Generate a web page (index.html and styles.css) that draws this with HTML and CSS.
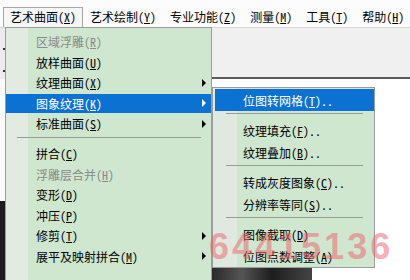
FILE: index.html
```html
<!DOCTYPE html>
<html lang="zh-CN">
<head>
  <meta charset="UTF-8">
  <title>艺术曲面菜单</title>
  <link rel="stylesheet" href="styles.css">
</head>
<body>
<div class="menubar">
  <div class="mb-item open">艺术曲面(<u>X</u>)</div>
  <div class="mb-item">艺术绘制(<u>Y</u>)</div>
  <div class="mb-item">专业功能(<u>Z</u>)</div>
  <div class="mb-item">测量(<u>M</u>)</div>
  <div class="mb-item">工具(<u>T</u>)</div>
  <div class="mb-item">帮助(<u>H</u>)</div>
</div>

<div class="workspace">
  <div class="edge">
    <div class="edge-tool"><span class="dot"></span><span class="dot"></span></div>
    <div class="edge-blank"></div>
    <div class="edge-photo"></div>
  </div>

  <div class="menu main-menu">
    <div class="item disabled">区域浮雕(<u>R</u>)</div>
    <div class="item">放样曲面(<u>U</u>)</div>
    <div class="item">纹理曲面(<u>X</u>)<span class="arrow"></span></div>
    <div class="item active">图象纹理(<u>K</u>)<span class="arrow"></span></div>
    <div class="item">标准曲面(<u>S</u>)<span class="arrow"></span></div>
    <div class="sep"></div>
    <div class="item">拼合(<u>C</u>)</div>
    <div class="item disabled">浮雕层合并(<u>H</u>)</div>
    <div class="item">变形(<u>D</u>)</div>
    <div class="item">冲压(<u>P</u>)</div>
    <div class="item">修剪(<u>T</u>)<span class="arrow"></span></div>
    <div class="item">展平及映射拼合(<u>M</u>)<span class="arrow"></span></div>
  </div>

  <div class="right">
    <div class="toolbar"></div>
    <div class="canvas">
      <div class="menu sub-menu">
        <div class="item active">位图转网格(<u>T</u>)..</div>
        <div class="sep"></div>
        <div class="item">纹理填充(<u>F</u>)..</div>
        <div class="item">纹理叠加(<u>B</u>)..</div>
        <div class="sep"></div>
        <div class="item">转成灰度图象(<u>C</u>)..</div>
        <div class="item">分辨率等同(<u>S</u>)..</div>
        <div class="sep"></div>
        <div class="item">图像截取(<u>D</u>)</div>
        <div class="item">位图点数调整(<u>A</u>)</div>
      </div>
      <div class="photo"></div>
    </div>
  </div>

  <div class="watermark">64415136</div>
</div>
</body>
</html>
```

FILE: styles.css
```css
body {
  margin: 0;
  width: 410px;
  height: 280px;
  overflow: hidden;
  background: #fff;
  font-family: "Noto Sans Mono CJK SC", "Noto Sans CJK SC", sans-serif;
  font-size: 12px;
  color: #000;
}

u {
  text-underline-offset: 1px;
}

/* menu bar */
.menubar {
  display: flex;
  align-items: flex-end;
  height: 27px;
  padding-left: 3px;
  background: #fcfcfc;
  box-sizing: border-box;
}

.mb-item {
  height: 19px;
  line-height: 18px;
  padding: 0 6px;
  border: 1px solid transparent;
  border-bottom: 0;
  white-space: nowrap;
}

.mb-item.open {
  border-color: #a6a6a6;
  background: #f6f6f6;
}

/* area under the bar */
.workspace {
  position: relative;
  display: flex;
  height: 253px;
  overflow: hidden;
}

.edge {
  width: 5px;
  display: flex;
  flex-direction: column;
}

.edge-tool {
  height: 52px;
  background: #ececec;
  border-top: 1px solid #d6d6d6;
  display: flex;
  flex-direction: column;
  align-items: flex-end;
  gap: 20px;
  padding-top: 20px;
  box-sizing: border-box;
}

.dot {
  width: 2px;
  height: 2px;
  background: #333;
}

.edge-blank {
  height: 122px;
  background: #fafafa;
}

.edge-photo {
  flex: 1;
  background: #1c1c1c;
}

/* menus */
.menu {
  box-sizing: border-box;
  border: 1px solid #9c9c9c;
}

.main-menu {
  width: 207px;
  flex-shrink: 0;
  border-bottom: 0;
  padding-top: 3px;
  background: linear-gradient(to right, #e1ebe1 22px, #cfe6cf 22px);
}

.item {
  display: flex;
  align-items: center;
  white-space: nowrap;
}

.main-menu .item {
  height: 19.5px;
  margin: 1px 0;
  padding: 0 5px 0 30px;
}

.item.disabled {
  color: #8a8a8a;
}

.item.active {
  background: #0b72d3;
  color: #fff;
}

.arrow {
  margin-left: auto;
  width: 0;
  height: 0;
  border-top: 4px solid transparent;
  border-bottom: 4px solid transparent;
  border-left: 4px solid #000;
}

.item.active .arrow {
  border-left-color: #fff;
}

.sep {
  height: 1px;
  background: #969e96;
}

.main-menu .sep {
  margin: 3px 10px 6.5px 11px;
}

.right {
  flex: 1;
  display: flex;
  flex-direction: column;
}

.toolbar {
  height: 56px;
  background: #f0f0f0;
  border-top: 1px solid #d8d8d8;
  border-bottom: 2px solid #5c5c5c;
}

.canvas {
  flex: 1;
  padding-top: 8px;
}

.sub-menu {
  width: 163px;
  padding-top: 1px;
  background: linear-gradient(to right, #dfe9df 24px, #cfe6cf 24px);
}

.sub-menu .item {
  height: 22px;
  margin-left: 2px;
  padding-left: 28px;
}

.sub-menu .sep {
  margin: 2px 11px 5px 13px;
}

.photo {
  width: 100px;
  height: 12px;
  background: linear-gradient(to right, #2a2a2a, #555 30%, #1e1e1e 60%, #444);
}

/* watermark over everything */
.watermark {
  position: absolute;
  left: 209px;
  top: 202px;
  font-family: "Liberation Sans", sans-serif;
  font-weight: bold;
  font-size: 36px;
  line-height: 1;
  letter-spacing: 3px;
  color: rgba(238, 96, 106, 0.5);
  pointer-events: none;
}
```
